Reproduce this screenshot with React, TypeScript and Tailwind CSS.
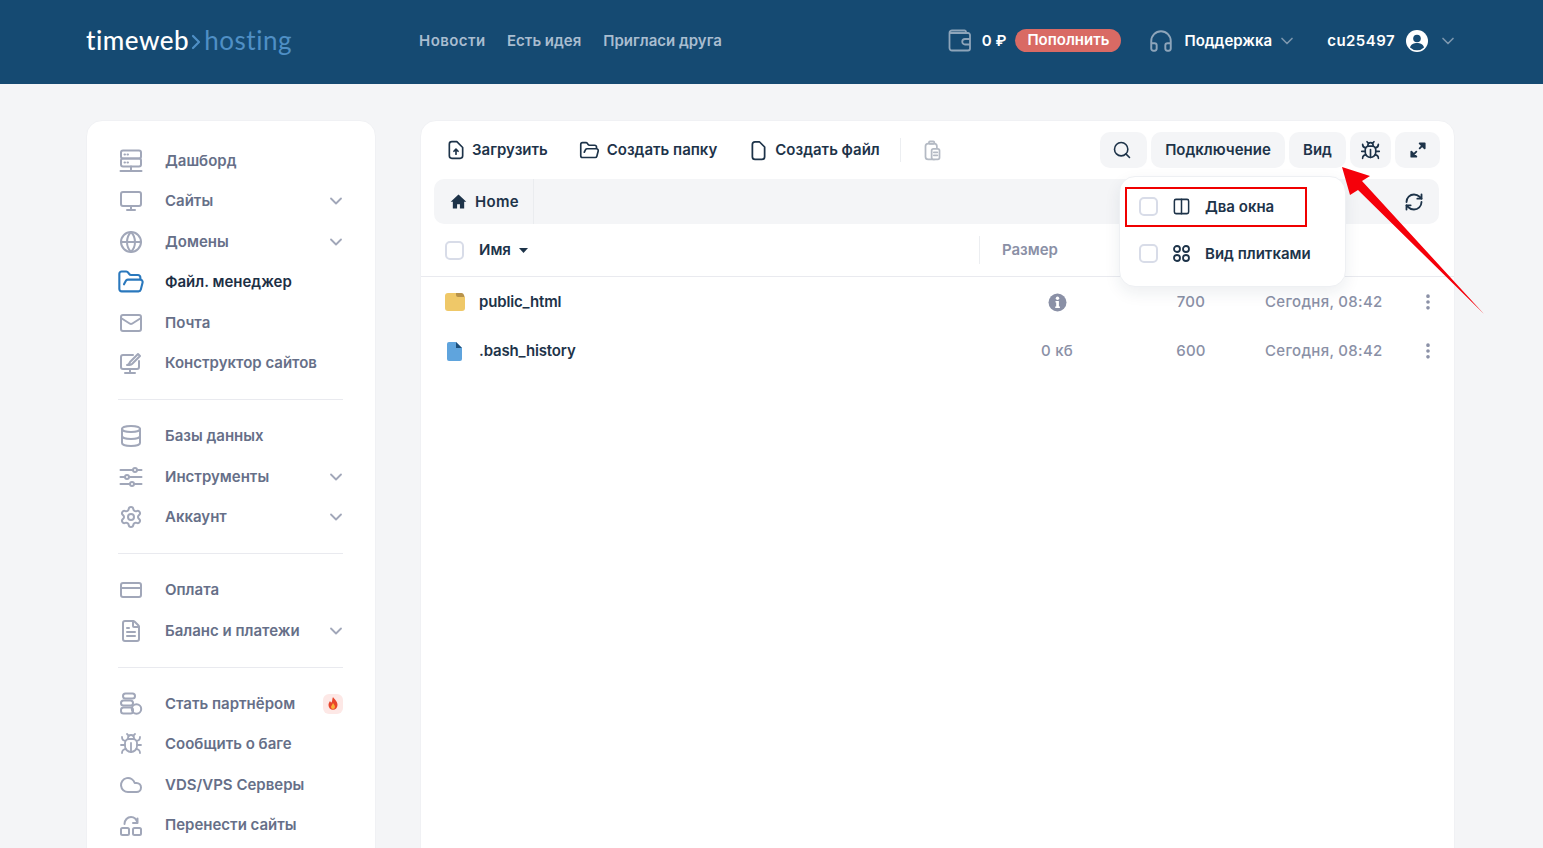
import React from "react";
import { ChevronDown, Monitor, Globe, FolderOpen, Mail, Database, Settings, CreditCard, FileText, Bug, Cloud, Search, RefreshCw, EllipsisVertical, Headphones, Columns2 } from "lucide-react";

const I = ({ children, size = 24, className = "" }: { children: React.ReactNode; size?: number; className?: string }) => (
  <svg width={size} height={size} viewBox="0 0 24 24" fill="none" stroke="currentColor" strokeWidth={2} strokeLinecap="round" strokeLinejoin="round" className={className}>{children}</svg>
);

const ServerI = () => <I><rect x="2" y="1.5" width="20" height="8" rx="2" /><rect x="2" y="9.5" width="20" height="8" rx="2" /><path d="M12 17.5v3M1.5 22h21M5.5 5.5h.5M8.5 5.5h.5M5.5 13.5h.5M8.5 13.5h.5" /></I>;
const BuilderI = () => <I><path d="M20 10v6a2 2 0 0 1-2 2H4a2 2 0 0 1-2-2V6a2 2 0 0 1 2-2h10" /><path d="M11 18v4M6 22h10M8 14c3 0 2-3 4-4l7-7 2 2-7 7c-1 2-3 2-6 2z" /></I>;
const SlidersI = () => <I><path d="M1.5 5h12M18 5h4.5M1.5 12h4M10 12h12.5M1.5 19h9M15 19h7.5" /><circle cx="16" cy="5" r="2" /><circle cx="8" cy="12" r="2" /><circle cx="13" cy="19" r="2" /></I>;
const CoinsI = () => <I><rect x="4" y="1.5" width="12" height="5" rx="2.5" /><rect x="2" y="8.5" width="12" height="5" rx="2.5" /><rect x="2" y="15.5" width="12" height="6" rx="2.5" /><circle cx="17.5" cy="17" r="4.7" /></I>;
const MoveI = () => <I><rect x="2" y="15" width="8" height="7" rx="1.5" /><rect x="14" y="15" width="8" height="7" rx="1.5" /><path d="M5.5 11c0-4 3-7 6.5-7s5.500 2 6.500 6M18.500 5.500V10H14" /></I>;

const Chevron = () => <ChevronDown size={20} strokeWidth={2.2} className="text-[#a1a7b9] ml-auto mr-[-3px]" />;

type Item = { icon: React.ReactNode; label: string; chevron?: boolean; active?: boolean; badge?: boolean };

const groups: Item[][] = [
  [
    { icon: <ServerI />, label: "Дашборд" },
    { icon: <Monitor size={24} strokeWidth={2} />, label: "Сайты", chevron: true },
    { icon: <Globe size={24} strokeWidth={2} />, label: "Домены", chevron: true },
    { icon: <FolderOpen size={28} strokeWidth={1.8} className="text-[#2a78bd] ml-[-2px] mr-[-2px]" />, label: "Файл. менеджер", active: true },
    { icon: <Mail size={24} strokeWidth={2} />, label: "Почта" },
    { icon: <BuilderI />, label: "Конструктор сайтов" },
  ],
  [
    { icon: <Database size={24} strokeWidth={2} />, label: "Базы данных" },
    { icon: <SlidersI />, label: "Инструменты", chevron: true },
    { icon: <Settings size={24} strokeWidth={2} />, label: "Аккаунт", chevron: true },
  ],
  [
    { icon: <CreditCard size={24} strokeWidth={2} />, label: "Оплата" },
    { icon: <FileText size={24} strokeWidth={2} />, label: "Баланс и платежи", chevron: true },
  ],
  [
    { icon: <CoinsI />, label: "Стать партнёром", badge: true },
    { icon: <Bug size={24} strokeWidth={1.8} />, label: "Сообщить о баге" },
    { icon: <Cloud size={24} strokeWidth={2} />, label: "VDS/VPS Серверы" },
    { icon: <MoveI />, label: "Перенести сайты" },
  ],
];

const Flame = () => (
  <svg width="10" height="13" viewBox="0 0 10 13"><path d="M5 0c1 2 4.500 4 4.500 8a4.500 4.800 0 0 1-9 0c0-2 1-3 1.500-4 .5 1 1 1.500 1.500 1.500C4.500 4 4 2 5 0z" fill="#e8452c" /><path d="M5 6c.5 1 2 2 2 4a2 2 0 0 1-4 0c0-1 1.500-2.500 2-4z" fill="#fbb03b" /></svg>
);

const InfoSolid = () => (
  <svg width="19" height="19" viewBox="0 0 19 19"><circle cx="9.500" cy="9.500" r="9" fill="#8a90a6" /><circle cx="9.500" cy="5.300" r="1.700" fill="#fff" /><path d="M7.500 8h3.400v5.500h1v1.500H7.200v-1.500h1V9.500h-.7z" fill="#fff" /></svg>
);

const Checkbox = () => <span className="block w-[19px] h-[19px] rounded-[5px] border-2 border-[#d8dce8] bg-white shrink-0" />;

const IconBtn = ({ children, className = "" }: { children: React.ReactNode; className?: string }) => (
  <button className={`h-[36px] rounded-[10px] bg-[#f4f5f7] flex items-center justify-center text-[#1d3349] text-[15px] font-semibold ${className}`}>{children}</button>
);

const Tool = ({ icon, label, className = "" }: { icon: React.ReactNode; label: string; className?: string }) => (
  <span className={`flex items-center text-[15px] font-semibold text-[#1d3349] ${className}`}>{icon}{label}</span>
);

const Row = ({ icon, name, size, perm }: { icon: React.ReactNode; name: string; size: React.ReactNode; perm: string }) => (
  <div className="h-[49px] flex items-center text-[15px] pt-[1px]">
    <div className="w-[58px] pl-[24px] shrink-0">{icon}</div>
    <div className="font-semibold text-[#1d3349] w-[499px] shrink-0 tracking-[-0.01em]">{name}</div>
    <div className="w-[158px] shrink-0 text-center text-[#8a90a6] font-medium flex justify-center tracking-[0.02em]">{size}</div>
    <div className="w-[110px] shrink-0 text-center text-[#8a90a6] font-medium tracking-[0.02em]">{perm}</div>
    <div className="w-[150px] shrink-0 text-[#8a90a6] font-medium pl-[19px] tracking-[0.02em]">Сегодня, 08:42</div>
    <EllipsisVertical size={20} strokeWidth={2.4} className="text-[#8a90a6] ml-[22px]" />
  </div>
);

export default function App() {
  return (
    <div className="relative h-[848px] overflow-hidden bg-[#f4f5f7] font-['Inter',sans-serif]">
      <header className="h-[84px] bg-[#154a72] flex items-center pl-[86px] pr-[85px]">
        <div className="flex items-center w-[333px] text-[26px] font-['Lato',sans-serif] leading-none tracking-[0.02em] mt-[-4px]">
          <span className="text-white font-medium">timeweb</span>
          <svg width="10" height="16" viewBox="0 0 10 16" fill="none" stroke="#4f8fc5" strokeWidth="2.200" strokeLinecap="round" strokeLinejoin="round" className="ml-[2px] mr-[3px] mt-[3px]"><path d="M2 2l6 6-6 6" /></svg>
          <span className="text-[#4f8fc5]">hosting</span>
        </div>
        <nav className="flex gap-[22px] text-[15px] font-semibold text-[#a9bdd0] mt-[-2px]">
          <span className="w-[66px] tracking-[0.03em]">Новости</span><span>Есть идея</span><span>Пригласи друга</span>
        </nav>
        <div className="ml-auto flex items-center text-white text-[15px] font-semibold mt-[-3px]">
          <svg width="24" height="24" viewBox="0 0 24 24" fill="none" stroke="#8ea5ba" strokeWidth="1.800" strokeLinecap="round" strokeLinejoin="round" className="mr-[10px]"><path d="M18 4V3a1.500 1.500 0 0 0-1.500-1.500H4A2.500 2.500 0 0 0 1.500 4v15A2.500 2.500 0 0 0 4 21.500h16a2 2 0 0 0 2-2V6a2 2 0 0 0-2-2H2M22 10h-5a2.500 2.500 0 0 0 0 5.500h5" /></svg>
          <span className="mr-[9px] mt-[1px]">0 ₽</span>
          <span className="h-[23px] rounded-full bg-[#d96a64] px-[12px] flex items-center text-[15px] mr-[27px]">Пополнить</span>
          <Headphones size={26} strokeWidth={1.8} className="text-[#8ea5ba] mr-[10px]" />
          <span className="mt-[1px]">Поддержка</span>
          <ChevronDown size={20} strokeWidth={2} className="text-[#7d97ae] ml-[5px] mr-[30px]" />
          <span className="mt-[1px] tracking-[0.03em]">cu25497</span>
          <svg width="24" height="24" viewBox="0 0 24 24" className="ml-[10px]"><circle cx="12" cy="12" r="11" fill="#fff" /><circle cx="12" cy="9.500" r="3.800" fill="#154a72" /><path d="M5 18.500c1-3.500 4-4.500 7-4.500s6 1 7 4.500a10 10 0 0 1-14 0z" fill="#154a72" /></svg>
          <ChevronDown size={20} strokeWidth={2} className="text-[#7d97ae] ml-[9px]" />
        </div>
      </header>

      <div className="flex items-start pl-[86px] pt-[36px] gap-[44px]">
        <aside className="w-[290px] h-[800px] shrink-0 rounded-[16px] bg-white border border-[#f0f1f4] pt-[19.5px] pl-[31px] pr-[32px]">
          {groups.map((g, i) => (
            <React.Fragment key={i}>
              {i > 0 && <div className="h-px bg-[#e9eaef] my-[15.75px]" />}
              {g.map((it) => (
                <div key={it.label} className={`h-[40.5px] flex items-center text-[15px] font-semibold ${it.active ? "text-[#1d2f45]" : "text-[#666f88]"}`}>
                  <span className="w-[26px] h-[26px] flex items-center justify-center text-[#a1a7b9] mr-[21px] shrink-0">{it.icon}</span>
                  {it.label}
                  {it.chevron && <Chevron />}
                  {it.badge && <span className="ml-auto w-[20px] h-[20px] rounded-[6px] bg-[#fde8e6] flex items-center justify-center"><Flame /></span>}
                </div>
              ))}
            </React.Fragment>
          ))}
        </aside>

        <main className="w-[1035px] h-[800px] shrink-0 rounded-[16px] bg-white border border-[#f0f1f4]">
          <div className="h-[58px] flex items-center pl-[25px] pr-[14px]">
            <Tool className="mr-[31px]" label="Загрузить" icon={
              <I size={20} className="mr-[6px]"><path d="M13 2H7a3 3 0 0 0-3 3v14a3 3 0 0 0 3 3h10a3 3 0 0 0 3-3V9z" /><path d="M12 17v-6M9.500 13.500 12 11l2.500 2.500" /></I>} />
            <Tool className="mr-[31px]" label="Создать папку" icon={<FolderOpen size={21} strokeWidth={1.9} className="mr-[7px]" />} />
            <Tool label="Создать файл" icon={
              <I size={21} className="mr-[6px]"><path d="M13 2H8a3 3 0 0 0-3 3v14a3 3 0 0 0 3 3h8a3 3 0 0 0 3-3V8z" /></I>} />
            <span className="w-px h-[24px] bg-[#eceef1] ml-[20px] mr-[21px]" />
            <I size={21} className="text-[#b4bac4]"><rect x="4" y="4" width="13" height="18" rx="3" /><rect x="8" y="1.500" width="6" height="3" rx="1" /><rect x="11" y="10" width="9" height="12" rx="2" fill="#fff" /><path d="M13.500 14h4M13.500 17.500h4" /></I>
            <div className="ml-auto flex gap-[4px]">
              <IconBtn className="w-[47px]"><Search size={20} strokeWidth={1.9} className="mr-[3px]" /></IconBtn>
              <IconBtn className="w-[134px]">Подключение</IconBtn>
              <IconBtn className="w-[57px]">Вид</IconBtn>
              <IconBtn className="w-[41px]"><Bug size={21} strokeWidth={1.9} /></IconBtn>
              <IconBtn className="w-[45px]">
                <svg width="20" height="20" viewBox="0 0 24 24" fill="#1d3349" stroke="#1d3349" strokeWidth="2.200" strokeLinecap="round" strokeLinejoin="round"><path d="M14 4h6v6zM10 20H4v-6zM19 5l-5 5M5 19l5-5" /></svg>
              </IconBtn>
            </div>
          </div>

          <div className="ml-[13px] mr-[15px] h-[45px] rounded-[10px] bg-[#f4f5f7] flex items-center text-[#1d3349]">
            <div className="h-full flex items-center pl-[16px] pr-[14px] border-r border-[#eaecef] text-[15px] font-semibold gap-[8px]">
              <svg width="17" height="17" viewBox="0 0 24 24" fill="#1d3349"><path d="M12 2 1 12.500h3V22h6v-6h4v6h6v-9.500h3z" /></svg>
              <span className="mt-[1px] tracking-[0.02em]">Home</span>
            </div>
            <RefreshCw size={20} strokeWidth={2.2} className="ml-auto mr-[15px] text-[#1d3349]" />
          </div>

          <div className="h-[53px] flex items-center border-b border-[#e9eaef] text-[15px]">
            <div className="pl-[24px] w-[58px] shrink-0"><Checkbox /></div>
            <span className="font-semibold text-[#1d3349]">Имя</span>
            <svg width="9" height="5" viewBox="0 0 9 5" className="ml-[8px]"><path d="M0 0h9L4.500 5z" fill="#1d3349" /></svg>
            <span className="w-px h-[28px] bg-[#eceef1] ml-[451px]" />
            <span className="ml-[22px] font-semibold text-[#8a90a6]">Размер</span>
          </div>

          <Row name="public_html" perm="700" size={<InfoSolid />}
            icon={<svg width="20" height="18" viewBox="0 0 20 18"><path d="M3 0h8l9 4v11a3 3 0 0 1-3 3H3a3 3 0 0 1-3-3V3a3 3 0 0 1 3-3z" fill="#efc868" /><path d="M11 0h5a3 3 0 0 1 3 2l.500 2H13a2 2 0 0 1-2-2z" fill="#b8934a" /></svg>} />
          <Row name=".bash_history" perm="600" size="0 кб"
            icon={<svg width="15" height="19" viewBox="0 0 15 19" className="ml-[2px]"><path d="M2 0h7l6 6v11a2 2 0 0 1-2 2H2a2 2 0 0 1-2-2V2a2 2 0 0 1 2-2z" fill="#5fa4dd" /><path d="M9 0l6 6H9z" fill="#1d4f7a" /></svg>} />
        </main>
      </div>

      {/* выпадающее меню «Вид» */}
      <div className="absolute left-[1119px] top-[176px] w-[227px] h-[111px] rounded-[16px] bg-white border border-[#eef0f3] shadow-[0_6px_16px_rgba(30,50,80,0.08)] text-[15px] font-semibold text-[#1d3349] pt-[12px] flex flex-col gap-[13px]">
        <div className="h-[34px] flex items-center pl-[19px]">
          <Checkbox />
          <Columns2 size={19} strokeWidth={1.9} className="ml-[14px] mr-[14px]" />
          <span className="mt-[2px]">Два окна</span>
        </div>
        <div className="h-[34px] flex items-center pl-[19px]">
          <Checkbox />
          <svg width="19" height="19" viewBox="0 0 19 19" fill="none" stroke="currentColor" strokeWidth="1.800" className="ml-[14px] mr-[14px]"><circle cx="5" cy="5" r="3" /><circle cx="14" cy="5" r="3" /><circle cx="5" cy="14" r="3" /><circle cx="14" cy="14" r="3" /></svg>
          <span className="mt-[2px]">Вид плитками</span>
        </div>
      </div>

      {/* пометки поверх скриншота */}
      <div className="absolute left-[1125px] top-[187px] w-[182px] h-[40px] border-2 border-[#f00000]" />
      <svg width="1543" height="848" className="absolute left-0 top-0 pointer-events-none">
        <polygon points="1342,167 1370,176 1362,181 1484,314 1358,190 1350,195" fill="#f5000a" />
      </svg>
    </div>
  );
}
